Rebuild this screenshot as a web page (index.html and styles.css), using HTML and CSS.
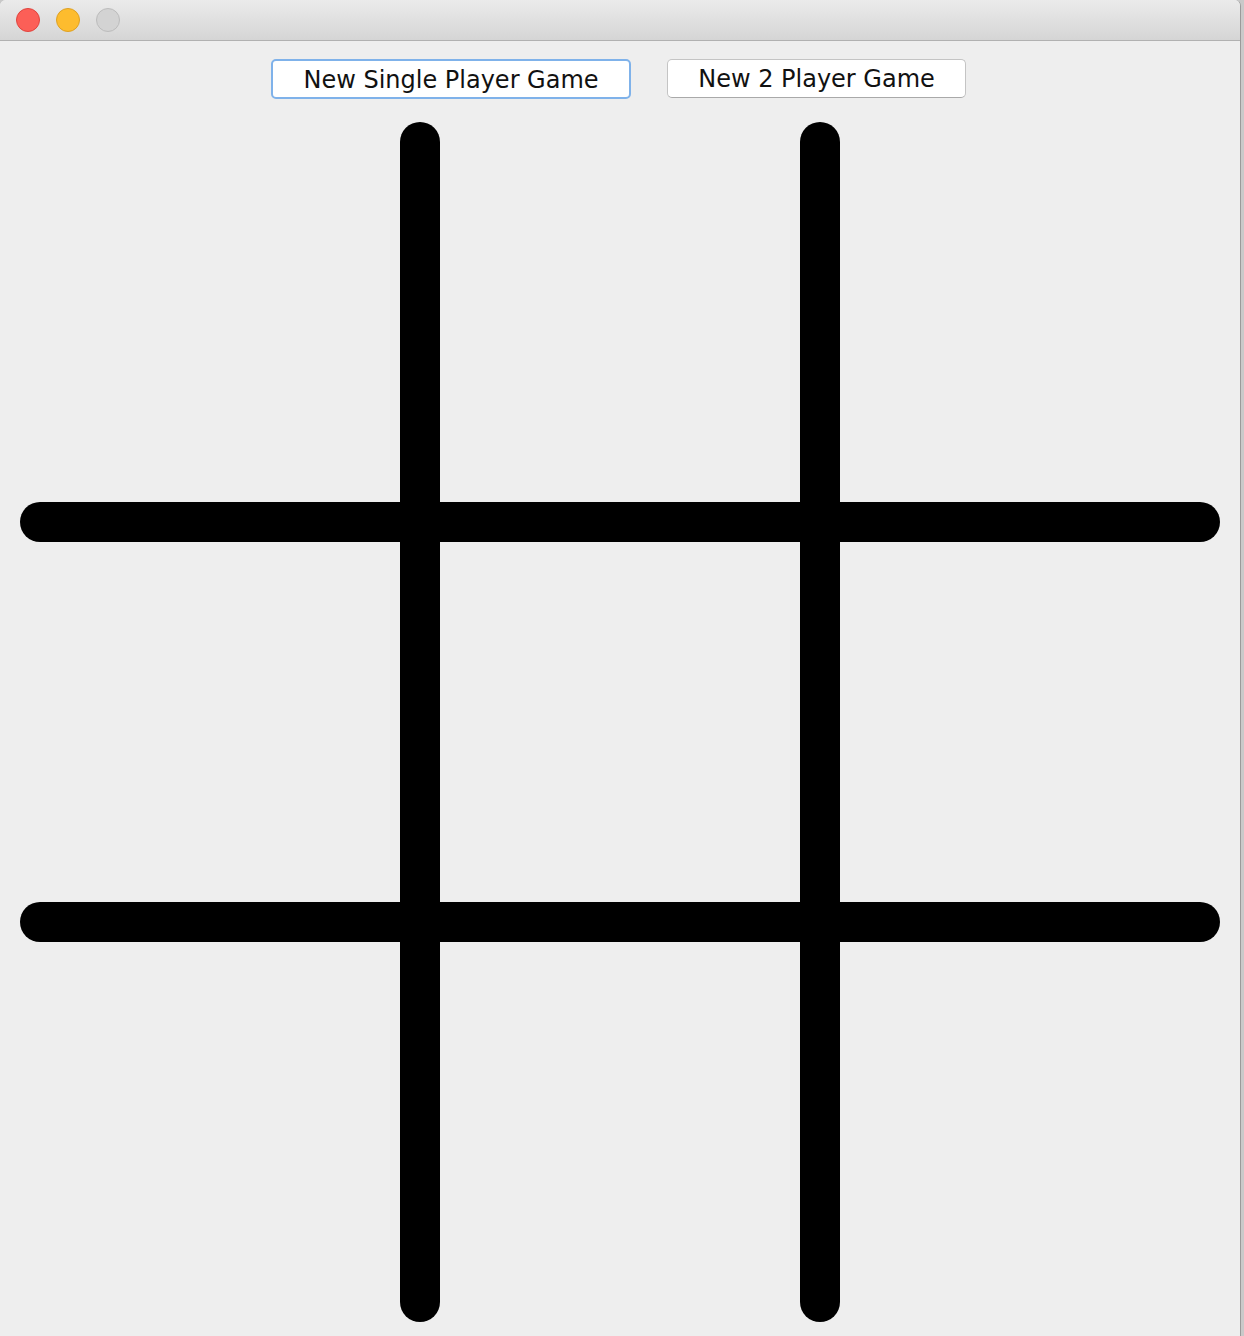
FILE: index.html
```html
<!DOCTYPE html>
<html>
<head>
<meta charset="utf-8">
<link rel="stylesheet" href="styles.css">
</head>
<body>
<div class="screen">
  <div class="window">
    <div class="titlebar">
      <span class="light red"></span>
      <span class="light yellow"></span>
      <span class="light gray"></span>
    </div>
    <div class="content">
      <div class="toolbar">
        <button class="btn btn-focus">New Single Player Game</button>
        <button class="btn btn-plain">New 2 Player Game</button>
      </div>
      <svg class="board" width="1240" height="1236" viewBox="0 0 1240 1236">
        <g stroke="#000" stroke-width="40" stroke-linecap="round">
          <line x1="420" y1="42" x2="420" y2="1202"/>
          <line x1="820" y1="42" x2="820" y2="1202"/>
          <line x1="40" y1="422" x2="1200" y2="422"/>
          <line x1="40" y1="822" x2="1200" y2="822"/>
        </g>
      </svg>
    </div>
  </div>
  <div class="edge"></div>
</div>
</body>
</html>
```
FILE: styles.css
```css
html, body {
  margin: 0;
  padding: 0;
  background: #5d6a7a;
}
.screen {
  display: flex;
  width: 1244px;
  height: 1336px;
  overflow: hidden;
  background: #c8c8c8;
}
.window {
  width: 1240px;
  height: 1336px;
  background: #eeeeee;
  border-right: 1px solid #9a9a9a;
  border-radius: 6px 6px 0 0;
  overflow: hidden;
  flex: none;
}
.edge {
  flex: 1;
  background: #c9c9c9;
}
.titlebar {
  height: 41px;
  box-sizing: border-box;
  background: linear-gradient(#ebebeb, #d5d5d5);
  border-bottom: 1px solid #b1b1b1;
  display: flex;
  align-items: flex-start;
  padding: 8px 0 0 16px;
  gap: 16px;
}
.light {
  width: 24px;
  height: 24px;
  border-radius: 50%;
  box-sizing: border-box;
  display: block;
}
.red { background: #fc5f57; border: 1px solid #e0443e; }
.yellow { background: #fdbc2e; border: 1px solid #dea123; }
.gray { background: #d3d3d3; border: 1px solid #bcbcbc; }
.content {
  background: #eeeeee;
}
.toolbar {
  height: 59px;
  box-sizing: border-box;
  padding: 18px 0 0 271px;
  display: flex;
  justify-content: flex-start;
  align-items: flex-start;
  gap: 36px;
}
.btn {
  font-family: "DejaVu Sans", sans-serif;
  font-size: 24px;
  color: #111;
  background: #fff;
  border-radius: 5px;
  margin: 0;
  padding: 1px 0 0 0;
  display: flex;
  align-items: center;
  justify-content: center;
}
.btn-focus {
  width: 360px;
  height: 40px;
  border: 2px solid #7fb2ea;
}
.btn-plain {
  width: 299px;
  height: 39px;
  border: 1px solid #c4c4c4;
  border-bottom-color: #a9a9a9;
}
.board {
  display: block;
}
```
